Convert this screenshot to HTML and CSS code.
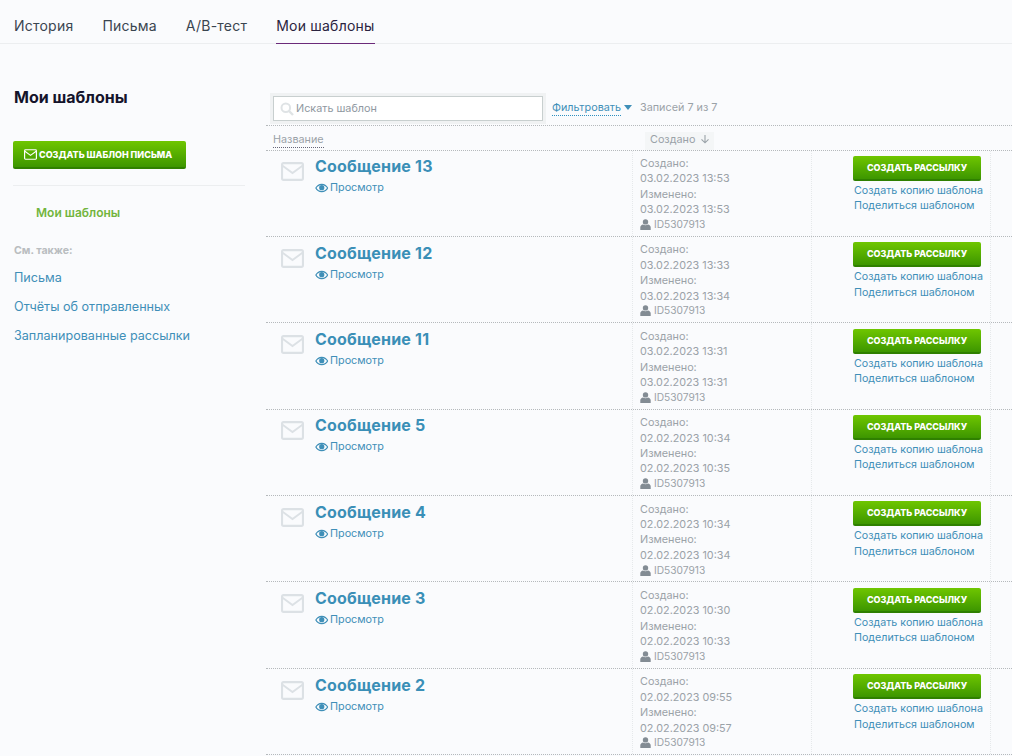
FILE: index.html
```html
<!DOCTYPE html>
<html lang="ru">
<head>
<meta charset="utf-8">
<title>Мои шаблоны</title>
<link rel="stylesheet" href="styles.css">
</head>
<body>
<svg class="defs" width="0" height="0" aria-hidden="true">
  <symbol id="env" viewBox="0 0 22 18"><rect x="1" y="1" width="20" height="16" rx="1.5" fill="none" stroke="currentColor" stroke-width="2"/><path d="M1.5 3.5 11 10.5 20.5 3.5" fill="none" stroke="currentColor" stroke-width="1.8"/></symbol>
  <symbol id="eye" viewBox="0 0 14 10"><path d="M7 .5C3.8.5 1.4 2.6.2 5c1.2 2.4 3.6 4.5 6.8 4.5S12.600 7.400 13.800 5C12.600 2.600 10.200.5 7 .5Zm0 1.300c2.300 0 4.300 1.400 5.400 3.200C11.300 6.800 9.300 8.200 7 8.200S2.700 6.800 1.600 5C2.700 3.200 4.700 1.800 7 1.800Z" fill="currentColor"/><circle cx="7" cy="4.700" r="2.700" fill="currentColor"/></symbol>
  <symbol id="user" viewBox="0 0 11 11"><circle cx="5.500" cy="2.900" r="2.700" fill="currentColor"/><path d="M.3 11V8.300C.3 6.600 1.700 5.600 3 5.400c1.400 1 3.600 1 5 0 1.300.2 2.700 1.200 2.700 2.900V11Z" fill="currentColor"/></symbol>
</svg>
<nav class="tabs">
  <a class="tab">История</a>
  <a class="tab">Письма</a>
  <a class="tab">А/В-тест</a>
  <a class="tab active">Мои шаблоны</a>
</nav>
<div class="page">
  <aside class="side">
    <h1 class="side-title">Мои шаблоны</h1>
    <a class="btn btn-main"><svg class="btn-ico"><use href="#env"/></svg>СОЗДАТЬ ШАБЛОН ПИСЬМА</a>
    <div class="side-rule"></div>
    <div class="side-current">Мои шаблоны</div>
    <div class="side-also">См. также:</div>
    <a class="side-link">Письма</a>
    <a class="side-link">Отчёты об отправленных</a>
    <a class="side-link">Запланированные рассылки</a>
  </aside>
  <main class="content">
    <div class="toolbar">
      <div class="search-wrap">
        <div class="search">
          <svg class="search-ico" viewBox="0 0 14 14"><circle cx="5.800" cy="5.800" r="4.300" fill="none" stroke="currentColor" stroke-width="2"/><path d="M9 9l4 4" stroke="currentColor" stroke-width="2.400"/></svg>
          <span>Искать шаблон</span>
        </div>
      </div>
      <a class="filter">Фильтровать</a><span class="caret"></span>
      <span class="count">Записей 7 из 7</span>
    </div>
    <div class="head">
      <span class="head-name"><span class="dotted">Название</span></span>
      <span class="head-created">Создано <svg class="arrow" viewBox="0 0 10 10"><path d="M5 1v7.500M1.500 5.300 5 8.800l3.500-3.500" fill="none" stroke="currentColor" stroke-width="1.100"/></svg></span>
    </div>
    <div class="row">
      <div class="r-main"><svg class="r-env"><use href="#env"/></svg><div><a class="r-title">Сообщение 13</a><a class="r-view"><svg class="r-eye"><use href="#eye"/></svg>Просмотр</a></div></div>
      <div class="r-date">Создано:<br>03.02.2023 13:53<br>Изменено:<br>03.02.2023 13:53<br><span class="r-id"><svg class="r-user"><use href="#user"/></svg>ID5307913</span></div>
      <div class="r-act"><a class="btn btn-row">СОЗДАТЬ РАССЫЛКУ</a><a class="r-link">Создать копию шаблона</a><a class="r-link">Поделиться шаблоном</a></div>
    </div>
    <div class="row">
      <div class="r-main"><svg class="r-env"><use href="#env"/></svg><div><a class="r-title">Сообщение 12</a><a class="r-view"><svg class="r-eye"><use href="#eye"/></svg>Просмотр</a></div></div>
      <div class="r-date">Создано:<br>03.02.2023 13:33<br>Изменено:<br>03.02.2023 13:34<br><span class="r-id"><svg class="r-user"><use href="#user"/></svg>ID5307913</span></div>
      <div class="r-act"><a class="btn btn-row">СОЗДАТЬ РАССЫЛКУ</a><a class="r-link">Создать копию шаблона</a><a class="r-link">Поделиться шаблоном</a></div>
    </div>
    <div class="row">
      <div class="r-main"><svg class="r-env"><use href="#env"/></svg><div><a class="r-title">Сообщение 11</a><a class="r-view"><svg class="r-eye"><use href="#eye"/></svg>Просмотр</a></div></div>
      <div class="r-date">Создано:<br>03.02.2023 13:31<br>Изменено:<br>03.02.2023 13:31<br><span class="r-id"><svg class="r-user"><use href="#user"/></svg>ID5307913</span></div>
      <div class="r-act"><a class="btn btn-row">СОЗДАТЬ РАССЫЛКУ</a><a class="r-link">Создать копию шаблона</a><a class="r-link">Поделиться шаблоном</a></div>
    </div>
    <div class="row">
      <div class="r-main"><svg class="r-env"><use href="#env"/></svg><div><a class="r-title">Сообщение 5</a><a class="r-view"><svg class="r-eye"><use href="#eye"/></svg>Просмотр</a></div></div>
      <div class="r-date">Создано:<br>02.02.2023 10:34<br>Изменено:<br>02.02.2023 10:35<br><span class="r-id"><svg class="r-user"><use href="#user"/></svg>ID5307913</span></div>
      <div class="r-act"><a class="btn btn-row">СОЗДАТЬ РАССЫЛКУ</a><a class="r-link">Создать копию шаблона</a><a class="r-link">Поделиться шаблоном</a></div>
    </div>
    <div class="row">
      <div class="r-main"><svg class="r-env"><use href="#env"/></svg><div><a class="r-title">Сообщение 4</a><a class="r-view"><svg class="r-eye"><use href="#eye"/></svg>Просмотр</a></div></div>
      <div class="r-date">Создано:<br>02.02.2023 10:34<br>Изменено:<br>02.02.2023 10:34<br><span class="r-id"><svg class="r-user"><use href="#user"/></svg>ID5307913</span></div>
      <div class="r-act"><a class="btn btn-row">СОЗДАТЬ РАССЫЛКУ</a><a class="r-link">Создать копию шаблона</a><a class="r-link">Поделиться шаблоном</a></div>
    </div>
    <div class="row">
      <div class="r-main"><svg class="r-env"><use href="#env"/></svg><div><a class="r-title">Сообщение 3</a><a class="r-view"><svg class="r-eye"><use href="#eye"/></svg>Просмотр</a></div></div>
      <div class="r-date">Создано:<br>02.02.2023 10:30<br>Изменено:<br>02.02.2023 10:33<br><span class="r-id"><svg class="r-user"><use href="#user"/></svg>ID5307913</span></div>
      <div class="r-act"><a class="btn btn-row">СОЗДАТЬ РАССЫЛКУ</a><a class="r-link">Создать копию шаблона</a><a class="r-link">Поделиться шаблоном</a></div>
    </div>
    <div class="row">
      <div class="r-main"><svg class="r-env"><use href="#env"/></svg><div><a class="r-title">Сообщение 2</a><a class="r-view"><svg class="r-eye"><use href="#eye"/></svg>Просмотр</a></div></div>
      <div class="r-date">Создано:<br>02.02.2023 09:55<br>Изменено:<br>02.02.2023 09:57<br><span class="r-id"><svg class="r-user"><use href="#user"/></svg>ID5307913</span></div>
      <div class="r-act"><a class="btn btn-row">СОЗДАТЬ РАССЫЛКУ</a><a class="r-link">Создать копию шаблона</a><a class="r-link">Поделиться шаблоном</a></div>
    </div>
  </main>
</div>
</body>
</html>
```
FILE: styles.css
```css
* { box-sizing: border-box; }
html, body { height: 756px; overflow: hidden; }
body { margin: 0; background: #fafbfd; font-family: Inter, "Noto Sans", sans-serif; color: #1a1a33; }
.defs { position: absolute; }
.tabs { display: flex; gap: 29px; height: 44px; padding-left: 14px; border-bottom: 1px solid #eceef0; }
.tab { font-size: 14px; letter-spacing: 0.22px; line-height: 17px; padding-top: 17px; height: 44px; color: #3a4550; border-bottom: 1px solid transparent; }
.tab.active { color: #2b2440; border-bottom-color: #6b2a7a; }
.page { display: flex; }
.side { width: 266px; flex: none; padding: 44px 21px 0 13px; }
.side-title { margin: 0 0 0 1px; font-size: 16px; line-height: 19px; font-weight: 700; color: #14142b; }
.btn { display: block; color: #fff; font-weight: 800; text-align: center; background: linear-gradient(#6fc600, #3d9600); border-bottom: 2px solid #2f8000; border-radius: 2px; }
.btn-main { display: flex; align-items: center; width: 173px; height: 28px; margin-top: 34px; padding-left: 11px; font-size: 9px; letter-spacing: -0.02px; }
.btn-ico { width: 13px; height: 11px; margin-right: 2px; color: #fff; }
.side-rule { height: 1px; margin-top: 16px; background: #eceef0; }
.side-current { margin: 19px 0 0 23px; font-size: 12px; line-height: 15px; font-weight: 600; color: #72b53e; }
.side-also { margin: 24px 0 0 1px; font-size: 10.600px; line-height: 13px; font-weight: 700; color: #b9bdc0; }
.side-link { display: block; margin: 14px 0 0 1px; font-size: 12.600px; line-height: 15px; color: #3f8fb8; }
.side-also + .side-link { margin-top: 13px; }
.content { flex: none; width: 746px; }
.toolbar { display: flex; align-items: flex-start; height: 37.500px; margin-top: 43.500px; padding: 5.500px 0 0 4px; font-size: 10.800px; }
.search-wrap { padding: 3px; background: #f0f2f3; margin-right: 6px; }
.search { display: flex; align-items: center; width: 270px; height: 25px; padding-left: 6px; background: #fff; border: 1px solid #c8cfcf; color: #8f989f; font-size: 10.800px; }
.search-ico { width: 14px; height: 14px; margin-right: 2px; color: #dfe3e5; }
.filter { color: #3f8fb8; border-bottom: 1px dotted #2e8fc0; line-height: 14px; margin-top: 8px; }
.caret { width: 0; height: 0; margin: 12px 0 0 3px; border: 4.500px solid transparent; border-top: 5px solid #3f8fb8; border-bottom: 0; }
.count { margin: 8px 0 0 8px; line-height: 14px; color: #9aa2a8; }
.head { display: flex; height: 25.500px; border-top: 1px dotted #b5b9bc; border-bottom: 1px dotted #b5b9bc; font-size: 10.800px; }
.head-name { width: 379px; padding: 7px 0 0 7px; color: #9aa2a8; line-height: 13px; }
.dotted { display: inline-block; height: 15px; border-bottom: 1px dotted #667; }
.head-created { display: block; height: 18px; margin-top: 6px; width: 69px; padding: 0 0 0 5px; background: #f4f6f7; color: #9aa2a8; line-height: 15px; }
.arrow { width: 10px; height: 10px; vertical-align: -1px; margin-left: 2px; }
.row { display: grid; grid-template-columns: 366px 180px 179px; height: 86.400px; border-bottom: 1px dotted #b5b9bc; }
.r-main { display: flex; padding: 6.800px 0 0 15px; }
.r-env { width: 23px; height: 19px; margin: 5px 11px 0 0; color: #dce1e5; flex: none; }
.r-title { display: block; font-size: 16px; letter-spacing: 0.2px; line-height: 19px; font-weight: 700; color: #3a8fb7; }
.r-view { display: flex; align-items: center; margin: 5px 0 0 0; font-size: 10.800px; line-height: 14px; color: #3f8fb8; }
.r-eye { width: 13.500px; height: 10px; margin-right: 1.500px; }
.r-date { padding: 5.500px 0 0 7px; border-left: 1px dotted #e6e9eb; border-right: 1px dotted #e6e9eb; font-size: 10.800px; line-height: 15.400px; color: #9aa2a8; }
.r-id { display: block; margin-top: -0.700px; font-size: 10.200px; }
.r-user { width: 11px; height: 11px; margin-right: 3px; vertical-align: -2px; color: #838c94; }
.r-act { padding: 5.300px 0 0 41px; border-right: 1px dotted #e6e9eb; }
.btn-row { width: 128px; height: 25px; margin-bottom: 2px; font-size: 9px; letter-spacing: -0.05px; line-height: 23px; }
.r-link { display: block; margin-left: 1px; font-size: 10.700px; line-height: 15.400px; color: #3f8fb8; white-space: nowrap; }
```
